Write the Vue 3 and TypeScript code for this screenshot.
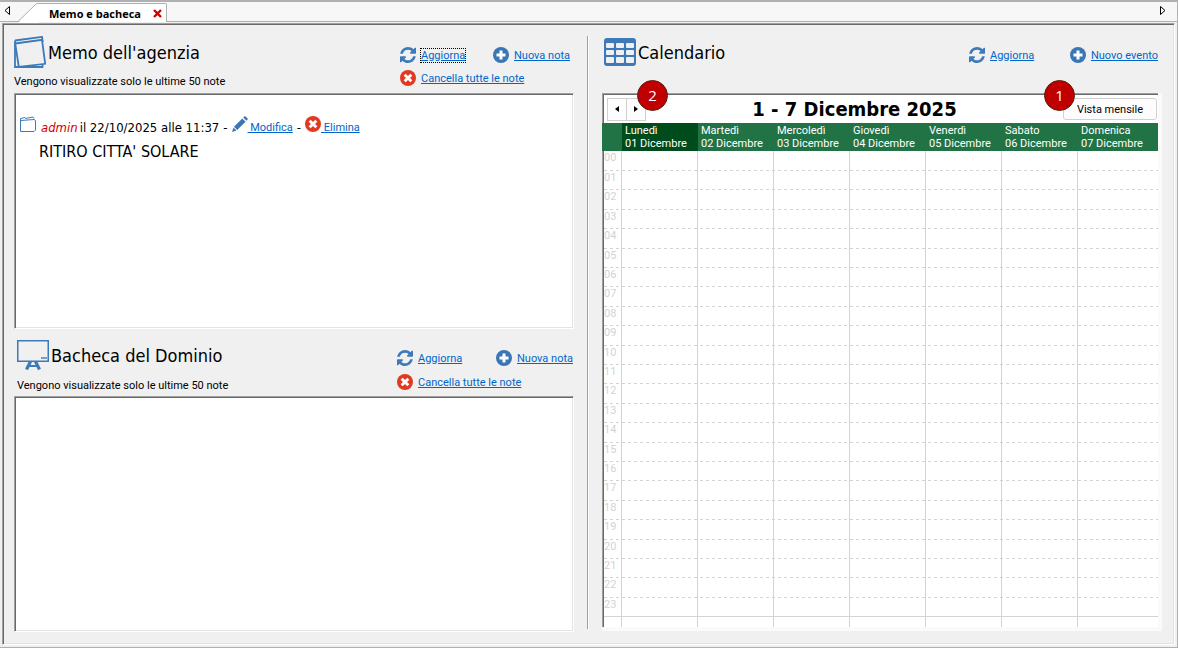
<script setup lang="ts">
import { ref } from 'vue'

interface Day {
  name: string
  date: string
}

const tabTitle = ref('Memo e bacheca')
const weekTitle = '1 - 7 Dicembre 2025'
const days: Day[] = [
  { name: 'Lunedì', date: '01 Dicembre' },
  { name: 'Martedì', date: '02 Dicembre' },
  { name: 'Mercoledì', date: '03 Dicembre' },
  { name: 'Giovedì', date: '04 Dicembre' },
  { name: 'Venerdì', date: '05 Dicembre' },
  { name: 'Sabato', date: '06 Dicembre' },
  { name: 'Domenica', date: '07 Dicembre' },
]
const selectedDay = ref(0)
const hours: string[] = Array.from({ length: 24 }, (_, h) => String(h).padStart(2, '0'))
</script>

<template>
  <svg class="defs" aria-hidden="true">
    <symbol id="i-refresh" viewBox="0 0 1536 1536">
      <path
        d="M1511 928q0 5-1 7-64 268-268 434.500t-478 166.500q-146 0-282.500-55t-243.500-157l-129 129q-19 19-45 19t-45-19-19-45v-448q0-26 19-45t45-19h448q26 0 45 19t19 45-19 45l-137 137q71 66 161 102t187 36q134 0 250-65t186-179q11-17 53-117 8-23 30-23h192q13 0 22.500 9.500t9.500 22.500zm25-800v448q0 26-19 45t-45 19h-448q-26 0-45-19t-19-45 19-45l138-138q-148-137-349-137-134 0-250 65t-186 179q-11 17-53 117-8 23-30 23h-199q-13 0-22.500-9.500t-9.500-22.500v-7q65-268 270-434.500t480-166.500q146 0 284 55.500t245 156.500l130-129q19-19 45-19t45 19 19 45z"
        fill="#3e79b9"
      />
    </symbol>
    <symbol id="i-plus" viewBox="0 0 16 16">
      <circle cx="8" cy="8" r="8" fill="#3a75b5" />
      <path d="M6.500 3.500h3v3h3v3h-3v3h-3v-3h-3v-3h3z" fill="#fff" />
    </symbol>
    <symbol id="i-cancel" viewBox="0 0 16 16">
      <circle cx="8" cy="8" r="8" fill="#e03a20" />
      <path d="M5.700 5.700l4.600 4.600M10.300 5.700l-4.600 4.600" stroke="#fff" stroke-width="2.900" stroke-linecap="square" />
    </symbol>
  </svg>

  <main class="window">
    <nav class="tabs">
      <button class="scroll" aria-label="Scheda precedente">
        <svg width="6" height="9" viewBox="0 0 6 9"><path d="M5.500 .5v8l-4.500-4z" fill="none" stroke="#000" /></svg>
      </button>
      <div class="tab">
        <svg class="slope" width="20" height="20" viewBox="0 0 20 20">
          <path d="M0 20L17 2Q18.500 .5 20 .5V20z" fill="#fff" />
          <path d="M0 18.500L17 2Q18.500 .5 20 .5" fill="none" stroke="#b0b0b0" />
        </svg>
        <div class="tab-body">
          <span>{{ tabTitle }}</span>
          <button class="close" aria-label="Chiudi scheda">
            <svg width="9" height="9" viewBox="0 0 9 9"><path d="M1 1l7 7M8 1l-7 7" stroke="#d00000" stroke-width="2.400" /></svg>
          </button>
        </div>
      </div>
      <button class="scroll next" aria-label="Scheda successiva">
        <svg width="6" height="9" viewBox="0 0 6 9"><path d="M.5 .5v8l4.500-4z" fill="none" stroke="#000" /></svg>
      </button>
    </nav>

    <div class="panel">
      <div class="pane notes">
        <header class="head memo-head">
          <div class="heading">
            <h1>
              <svg width="32" height="32" viewBox="0 0 32 32" fill="none" stroke="#3e79b9" stroke-width="1.800">
                <path d="M1 4.500L28 .9l.8 5" />
                <path d="M1 4.500V31h27.500v-3" />
                <path d="M1.200 7.500L28 3.800l3.200 24L4.800 31z" />
              </svg>
              <span>Memo dell'agenzia</span>
            </h1>
            <p>Vengono visualizzate solo le ultime 50 note</p>
          </div>
          <div class="actions">
            <a href="#" class="focused"><svg width="16" height="16"><use href="#i-refresh" /></svg><span>Aggiorna</span></a>
            <a href="#"><svg width="16" height="16"><use href="#i-plus" /></svg><span>Nuova nota</span></a>
            <a href="#"><svg width="16" height="16"><use href="#i-cancel" /></svg><span>Cancella tutte le note</span></a>
          </div>
        </header>
        <section class="box">
          <article class="note">
            <div class="meta">
              <svg class="mini" width="16" height="16" viewBox="0 0 16 16" fill="none" stroke="#3e79b9">
                <path d="M.5 2.500L5 1.500l.5 1 7.500-1.500 1 1.500" />
                <path d="M.5 2.500V15.500h13.500" />
                <path d="M1 4.500l13-1 1.500 1V14l-1.500 1.500" />
              </svg>
              <em>admin</em>
              <span class="when">il 22/10/2025 alle 11:37</span>
              <span class="dash">-</span>
              <a href="#" class="inline">
                <svg width="16" height="16" viewBox="0 0 16 16" fill="#3a75b5">
                  <path d="M11.200 1.600l1.200-1.200q.6-.5 1.200 0l2 2q.5.600 0 1.200l-1.200 1.200zM10.300 2.500l3.200 3.200-8.300 8.300L2 10.800zM1.500 11.500l3 3L0 16z" />
                </svg>
                <span>&nbsp;Modifica</span>
              </a>
              <span class="dash">-</span>
              <a href="#" class="inline">
                <svg width="16" height="16"><use href="#i-cancel" /></svg>
                <span>&nbsp;Elimina</span>
              </a>
            </div>
            <p class="text">RITIRO CITTA' SOLARE</p>
          </article>
        </section>

        <header class="head board-head">
          <div class="heading">
            <h1>
              <svg width="32" height="30" viewBox="0 0 32 30" fill="none" stroke="#3e79b9">
                <rect x=".75" y=".75" width="30.500" height="20.500" stroke-width="1.500" />
                <path d="M24 18h6" stroke-width="1.400" />
                <path d="M13.500 21.500L9.500 29.500M18.500 21.500l4 8" stroke-width="3.200" />
                <path d="M11.500 26h9" stroke-width="2" />
              </svg>
              <span>Bacheca del Dominio</span>
            </h1>
            <p>Vengono visualizzate solo le ultime 50 note</p>
          </div>
          <div class="actions">
            <a href="#"><svg width="16" height="16"><use href="#i-refresh" /></svg><span>Aggiorna</span></a>
            <a href="#"><svg width="16" height="16"><use href="#i-plus" /></svg><span>Nuova nota</span></a>
            <a href="#"><svg width="16" height="16"><use href="#i-cancel" /></svg><span>Cancella tutte le note</span></a>
          </div>
        </header>
        <section class="box"></section>
      </div>

      <div class="divider"></div>

      <div class="pane agenda">
        <header class="head cal-head">
          <div class="heading">
            <h1>
              <svg width="32" height="28" viewBox="0 0 32 28">
                <rect width="32" height="28" rx="3" fill="#3e79b9" />
                <g fill="#f0f0f0">
                  <rect x="2" y="5" width="8" height="5" rx="1" /><rect x="12" y="5" width="8" height="5" rx="1" /><rect x="22" y="5" width="8" height="5" rx="1" />
                  <rect x="2" y="12" width="8" height="5" rx="1" /><rect x="12" y="12" width="8" height="5" rx="1" /><rect x="22" y="12" width="8" height="5" rx="1" />
                  <rect x="2" y="19" width="8" height="6" rx="1" /><rect x="12" y="19" width="8" height="6" rx="1" /><rect x="22" y="19" width="8" height="6" rx="1" />
                </g>
              </svg>
              <span>Calendario</span>
            </h1>
          </div>
          <div class="actions">
            <a href="#"><svg width="16" height="16"><use href="#i-refresh" /></svg><span>Aggiorna</span></a>
            <a href="#"><svg width="16" height="16"><use href="#i-plus" /></svg><span>Nuovo evento</span></a>
          </div>
        </header>

        <section class="calendar">
          <div class="sheet">
            <div class="toolbar">
              <div class="steps">
                <button aria-label="Settimana precedente"><svg width="4" height="6" viewBox="0 0 4 6"><path d="M4 0v6L0 3z" /></svg></button>
                <button aria-label="Settimana successiva"><svg width="4" height="6" viewBox="0 0 4 6"><path d="M0 0v6l4-3z" /></svg></button>
              </div>
              <h2>{{ weekTitle }}</h2>
              <button class="view">Vista mensile</button>
            </div>
            <table>
              <thead>
                <tr>
                  <th class="hour"></th>
                  <th v-for="(day, i) in days" :key="day.name" class="day" :class="{ selected: i === selectedDay }" scope="col">
                    {{ day.name }}<br />{{ day.date }}
                  </th>
                </tr>
              </thead>
              <tbody>
                <tr v-for="hour in hours" :key="hour" class="slot">
                  <th class="hour" scope="row">{{ hour }}</th>
                  <td v-for="day in days" :key="day.name"></td>
                </tr>
                <tr class="rest">
                  <td></td>
                  <td v-for="day in days" :key="day.name"></td>
                </tr>
              </tbody>
            </table>
          </div>
          <span class="badge two">2</span>
          <span class="badge one">1</span>
        </section>
      </div>
    </div>
  </main>
</template>

<style>
body {
  margin: 0;
  background: #f0f0f0;
}
</style>

<style scoped>
* {
  box-sizing: border-box;
}
.defs {
  position: absolute;
  width: 0;
  height: 0;
}
.window {
  min-height: 100vh;
  display: flex;
  flex-direction: column;
  padding-bottom: 2px;
  border-top: 2px solid #b0b0b0;
  border-right: 1px solid #b0b0b0;
  border-bottom: 1px solid #b0b0b0;
  background: #f0f0f0;
  color: #000;
  font: 11px/13px Roboto, sans-serif;
}
button {
  margin: 0;
  padding: 0;
  border: 0;
  background: none;
  font: inherit;
  color: inherit;
}
svg {
  display: block;
  flex: none;
}
h1,
h2,
p {
  margin: 0;
  font-weight: 400;
}
h1,
h2,
.meta,
.text {
  font-family: "DejaVu Sans Condensed", "DejaVu Sans", sans-serif;
}
.tabs {
  display: flex;
  height: 20px;
  border-bottom: 1px solid #b0b0b0;
  background: #f7f7f7;
}
.scroll {
  display: flex;
  align-items: center;
  height: 17px;
  padding-left: 4px;
}
.next {
  margin-left: auto;
  padding: 0 11px 0 0;
}
.tab {
  display: flex;
  height: 19px;
  margin: 1px 0 0 8px;
}
.tab-body {
  display: flex;
  align-items: center;
  gap: 12px;
  padding: 0 4px 0 11px;
  border-top: 1px solid #b0b0b0;
  border-right: 1px solid #b0b0b0;
  border-radius: 0 2px 0 0;
  background: #fff;
  font-family: "Open Sans", sans-serif;
  font-weight: 700;
}
.panel {
  flex: 1;
  display: flex;
  margin: 1px 2px 0;
  padding: 1px 12px 12px 11px;
  border: 1px solid;
  border-color: #a0a0a0 #fff #fff #a0a0a0;
  box-shadow: inset 1px 1px #696969, inset -1px -1px #e3e3e3;
}
.pane {
  flex: 1 1 0;
  min-width: 0;
}
.notes {
  display: grid;
  grid-template-rows: 68px 1fr 67px 1fr;
}
.divider {
  width: 2px;
  margin: 11px 13px 3px;
  background: linear-gradient(90deg, #a0a0a0 50%, #fff 50%);
}
.head {
  display: flex;
  justify-content: space-between;
}
h1 {
  display: flex;
  align-items: center;
  gap: 2px;
  height: 32px;
  font-size: 18px;
  line-height: 24px;
}
h1 span {
  padding-top: 2px;
}
.memo-head {
  padding: 11px 4px 0 0;
}
.memo-head p {
  margin-top: 7px;
}
.board-head {
  padding: 10px 1px 0 3px;
}
.board-head p {
  margin-top: 8px;
}
.cal-head {
  padding: 11px 4px 0 2px;
}
.actions {
  display: flex;
  flex-wrap: wrap;
  justify-content: space-between;
  align-content: flex-start;
  row-gap: 7px;
  width: 170px;
  padding-top: 11px;
}
.board-head .actions {
  width: 176px;
  row-gap: 8px;
}
.cal-head .actions {
  width: 189px;
}
.actions a {
  display: flex;
  align-items: center;
  gap: 5px;
  height: 16px;
}
a {
  color: #0066cc;
}
.focused span {
  outline: 1px dotted #000;
}
.box {
  border: 1px solid;
  border-color: #a0a0a0 #fff #fff #a0a0a0;
  background: #fff;
  box-shadow: inset 1px 1px #696969, inset -1px -1px #e3e3e3;
}
.note {
  padding: 22px 5px 0;
}
.meta {
  display: flex;
  height: 24px;
  align-items: center;
  font-size: 13px;
  line-height: 16px;
}
.meta em {
  margin-left: 5px;
  color: #d00000;
}
.meta .when {
  margin-left: 2px;
}
.meta .dash {
  margin: 0 4px;
}
.mini,
.inline svg {
  margin-bottom: 8px;
}
.inline {
  display: flex;
  align-items: center;
  font-family: Roboto, sans-serif;
  font-size: 11px;
}
.text {
  margin-left: 19px;
  font-size: 16px;
  line-height: 24px;
}
.agenda {
  display: grid;
  grid-template-rows: 68px 1fr;
  padding-bottom: 1px;
}
.calendar {
  position: relative;
  display: flex;
  padding: 0 4px 4px 0;
  background: #fafafa;
}
.sheet {
  flex: 1;
  padding-top: 1px;
  border-top: 1px solid #a0a0a0;
  background:
    linear-gradient(#696969, #696969) 1px 0 / 100% 1px no-repeat,
    linear-gradient(90deg, #a0a0a0 1px, #696969 1px 2px, #fff 2px);
}
.toolbar {
  display: flex;
  align-items: center;
  justify-content: space-between;
  height: 28px;
  padding: 0 1px 0 5px;
}
.steps {
  display: flex;
}
.steps button {
  display: flex;
  align-items: center;
  justify-content: center;
  width: 20px;
  height: 23px;
  border: 1px solid #d0d0d0;
  background: #fdfdfd;
}
.steps button + button {
  margin-left: -1px;
}
h2 {
  font-size: 20px;
  line-height: 24px;
  font-weight: 700;
}
.view {
  width: 94px;
  height: 22px;
  border: 1px solid #d0d0d0;
  border-radius: 3px;
  background: #fdfdfd;
}
table {
  width: 100%;
  table-layout: fixed;
  border-collapse: separate;
  border-spacing: 0;
}
th,
td {
  padding: 0;
  font-weight: 400;
  text-align: left;
}
thead th {
  height: 28px;
  background: #217346;
  color: #fff;
}
thead .hour {
  width: 20px;
}
.day {
  padding-left: 3px;
  white-space: nowrap;
}
.day:not(:last-child) {
  width: 13.67%;
}
thead .selected {
  background: #004b1c;
}
tbody th,
tbody td {
  border-right: 1px solid #d3d3d3;
}
tbody td:last-child {
  border-right: 0;
}
.slot {
  height: 19px;
  background: repeating-linear-gradient(90deg, #d3d3d3 0 3px, transparent 3px 6px) 2px 100% / 100% 1px no-repeat;
}
.slot:first-child,
.slot:nth-child(5n + 3),
.slot:nth-child(5n + 5) {
  height: 20px;
}
.slot:nth-child(24) {
  background: linear-gradient(#d3d3d3, #d3d3d3) 2px 100% / 100% 1px no-repeat;
}
.slot .hour {
  padding-left: 2px;
  vertical-align: top;
  color: #d3d3d3;
}
.rest {
  height: 10px;
}
.badge {
  position: absolute;
  top: -13px;
  width: 31px;
  height: 31px;
  border: 1px solid #5a2010;
  border-radius: 50%;
  background: #c00000;
  color: #fff;
  font: 15px/29px "Open Sans", sans-serif;
  text-align: center;
}
.two {
  left: 35px;
}
.one {
  right: 87px;
}
</style>
